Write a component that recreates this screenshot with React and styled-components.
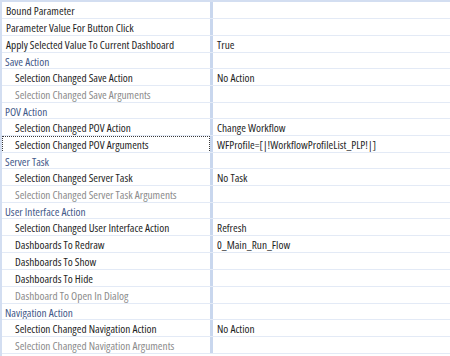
import React from "react";
import styled, { createGlobalStyle } from "styled-components";

const Global = createGlobalStyle`
  html, body { margin: 0; padding: 0; background: #ffffff; }
  body { font-family: "Open Sans", sans-serif; }
`;

const Grid = styled.div`
  width: 450px;
  height: 356px;
  overflow: hidden;
  box-sizing: border-box;
  border-top: 2px solid #d3def1;
  border-left: 2px solid #d3def1;
  background: #ffffff;
`;

const Row = styled.div`
  display: grid;
  grid-template-columns: 211px 1fr;
  height: ${(p) => (p.$category ? 16 : 17)}px;
  box-sizing: border-box;
  border-bottom: 1px solid #e3eaf6;
`;

const Label = styled.div`
  position: relative;
  display: flex;
  align-items: center;
  padding-left: ${(p) => (p.$category ? 3 : p.$indent ? 13 : 4)}px;
  padding-top: 1px;
  border-right: 3px solid #c9d7ee;
  font-family: "Open Sans", sans-serif;
  font-size: 11.3px;
  font-stretch: 82%;
  white-space: nowrap;
  overflow: hidden;
  color: ${(p) =>
    p.$category ? "#43598a" : p.$disabled ? "#8c8c8c" : "#1f1f1f"};

  &::after {
    content: "";
    display: ${(p) => (p.$focused ? "block" : "none")};
    position: absolute;
    left: 0;
    top: 0;
    right: 0;
    bottom: -1px;
    border: 1px dotted #3a3a3a;
    pointer-events: none;
  }
`;

const Value = styled.div`
  display: flex;
  align-items: center;
  padding-left: 4px;
  padding-top: 1px;
  font-family: "Open Sans", sans-serif;
  font-size: 11.3px;
  font-stretch: 82%;
  white-space: nowrap;
  color: #1f1f1f;
`;

const rows = [
  { label: "Bound Parameter" },
  { label: "Parameter Value For Button Click" },
  { label: "Apply Selected Value To Current Dashboard", value: "True" },
  { label: "Save Action", category: true },
  { label: "Selection Changed Save Action", indent: true, value: "No Action" },
  { label: "Selection Changed Save Arguments", indent: true, disabled: true },
  { label: "POV Action", category: true },
  { label: "Selection Changed POV Action", indent: true, value: "Change Workflow" },
  {
    label: "Selection Changed POV Arguments",
    indent: true,
    focused: true,
    value: "WFProfile=[|!WorkflowProfileList_PLP!|]",
  },
  { label: "Server Task", category: true },
  { label: "Selection Changed Server Task", indent: true, value: "No Task" },
  { label: "Selection Changed Server Task Arguments", indent: true, disabled: true },
  { label: "User Interface Action", category: true },
  { label: "Selection Changed User Interface Action", indent: true, value: "Refresh" },
  { label: "Dashboards To Redraw", indent: true, value: "0_Main_Run_Flow" },
  { label: "Dashboards To Show", indent: true },
  { label: "Dashboards To Hide", indent: true },
  { label: "Dashboard To Open In Dialog", indent: true, disabled: true },
  { label: "Navigation Action", category: true },
  { label: "Selection Changed Navigation Action", indent: true, value: "No Action" },
  { label: "Selection Changed Navigation Arguments", indent: true, disabled: true },
];

export default function App() {
  return (
    <>
      <Global />
      <Grid>
        {rows.map((r, i) => (
          <Row key={i} $category={r.category}>
            <Label
              $category={r.category}
              $indent={r.indent}
              $disabled={r.disabled}
              $focused={r.focused}
            >
              {r.label}
            </Label>
            <Value>{r.value || ""}</Value>
          </Row>
        ))}
      </Grid>
    </>
  );
}
